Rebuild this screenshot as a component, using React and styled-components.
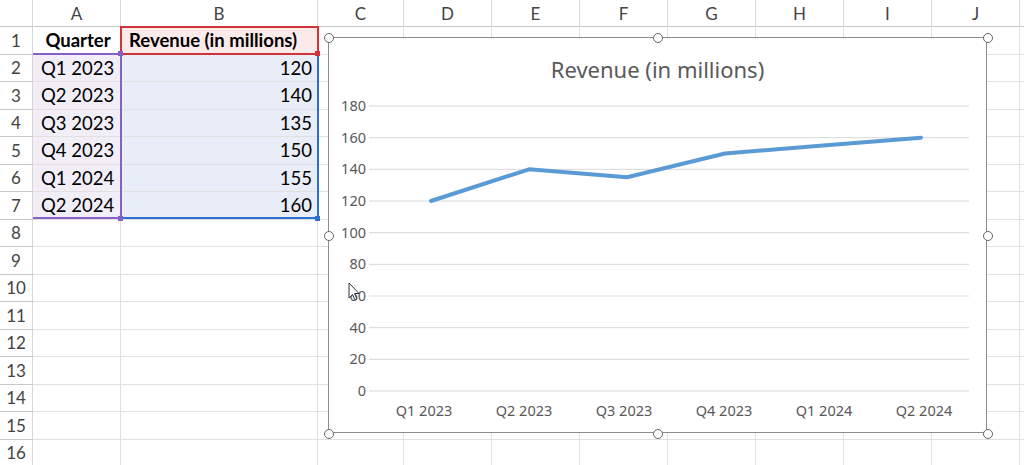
import React from "react";
import styled, { createGlobalStyle } from "styled-components";

const G = createGlobalStyle`
  body { margin:0; background:#fff; font-family: Lato, "Noto Sans", sans-serif; }
`;
const cols = [33, 88, 197, 86, 88, 88, 88, 88, 88, 88, 88, 30];
const letters = ["", "A", "B", "C", "D", "E", "F", "G", "H", "I", "J", ""];
const RH = 27.5;

const Sheet = styled.div`
  position: relative; width:1024px; height:465px; overflow:hidden;
  display:grid; grid-template-columns:${cols.map(c => c + "px").join(" ")};
  grid-template-rows:27px repeat(16, ${RH}px);
`;
const Cell = styled.div`
  box-sizing:border-box; border-right:1px solid #e1e1e1; border-bottom:1px solid #e1e1e1;
  font-size:18.5px; color:#000; display:flex; align-items:center; white-space:nowrap;
  padding:0 5px 0 8px;
  justify-content:${p => p.$right ? "flex-end" : p.$center ? "center" : "flex-start"};
  font-weight:${p => p.$bold ? 700 : 400};
  background:${p => p.$bg || "#fff"};
`;
const Head = styled(Cell)`
  background:#fff; color:#444; justify-content:center; font-size:17px; padding:0;
  border-right:1px solid #d6d6d6; border-bottom:1px solid #c8c8c8;
`;
const Sel = styled.div`
  position:absolute; box-sizing:border-box; pointer-events:none;
`;
const RedSel = styled(Sel)`left:120px; top:26px; width:199px; height:29px; border:2px solid #d13438;`;
const PurpleSel = styled(Sel)`left:33px; top:53px; width:89px; height:166px; border:2px solid #8661c5; border-left:none;`;
const BlueSel = styled(Sel)`left:120px; top:53px; width:199px; height:166px; border:2px solid #2f6fd0; border-top:none; border-left-color:#8661c5;`;
const Dot = styled.div`
  position:absolute; width:5px; height:5px; background:${p => p.$c};
  left:${p => p.$x}px; top:${p => p.$y}px;
`;
const Chart = styled.div`
  position:absolute; left:328px; top:37px; width:659px; height:396px;
  background:#fff; border:1px solid #8c8c8c; box-sizing:border-box;
  display:flex; flex-direction:column; align-items:center;
`;
const Title = styled.div`
  margin-top:16px; font-size:22px; color:#595959; position:relative; z-index:1;
  font-family:"Noto Sans", sans-serif;
`;
const Plot = styled.svg`position:absolute; left:0; top:0;`;
const Handle = styled.div`
  position:absolute; width:8px; height:8px; border:1.5px solid #666; border-radius:50%; background:#fff;
  left:${p => p.$a * 659 - 5.5}px; top:${p => p.$b * 396 - 5.5}px;
`;

const quarters = ["Q1 2023","Q2 2023","Q3 2023","Q4 2023","Q1 2024","Q2 2024"];
const vals = [120,140,135,150,155,160];

export default function App() {
  const rows = [];
  rows.push(letters.map((l, i) => <Head key={"h"+i}>{l}</Head>));
  for (let r = 1; r <= 16; r++) {
    rows.push(cols.map((_, i) => {
      if (i === 0) return <Head key={r+"-"+i}>{r}</Head>;
      let txt = "", bold=false, right=false, center=false, bg;
      if (r === 1 && i === 1) { txt = "Quarter"; bold = true; center = true; }
      if (r === 1 && i === 2) { txt = "Revenue (in millions)"; bold = true; bg="#fbeaea"; }
      if (r >= 2 && r <= 7 && i === 1) { txt = quarters[r-2]; bg="#f1eef8"; }
      if (r >= 2 && r <= 7 && i === 2) { txt = vals[r-2]; right = true; bg="#e9edf7"; }
      return <Cell key={r+"-"+i} $bold={bold} $right={right} $center={center} $bg={bg}>{txt}</Cell>;
    }));
  }
  const px = i => 430 - 328 + i * 98;
  const py = v => 390 - 37 - v * (285/180);
  const hpos = [[0,0],[0.5,0],[1,0],[0,0.5],[1,0.5],[0,1],[0.5,1],[1,1]];
  return (
    <>
      <G />
      <Sheet>
        {rows}
        <RedSel />
        <PurpleSel />
        <BlueSel />
        <Dot $c="#d13438" $x={315} $y={51} />
        <Dot $c="#8661c5" $x={118} $y={51} />
        <Dot $c="#8661c5" $x={118} $y={216} />
        <Dot $c="#2f6fd0" $x={315} $y={216} />
        <Chart>
          <Plot width="659" height="396">
            {[0,20,40,60,80,100,120,140,160,180].map(v => (
              <g key={v}>
                <line x1={40} x2={640} y1={py(v)} y2={py(v)} stroke="#d9d9d9" strokeWidth="1" />
                <text x={37} y={py(v)+5} textAnchor="end" fontSize="14.5" fill="#595959" fontFamily="Noto Sans, sans-serif">{v}</text>
              </g>
            ))}
            {quarters.map((q, i) => (
              <text key={q} x={95 + i*100} y={378} textAnchor="middle" fontSize="14.5" fill="#595959" fontFamily="Noto Sans, sans-serif">{q}</text>
            ))}
            <polyline fill="none" stroke="#5b9bd5" strokeWidth="4" strokeLinejoin="round" strokeLinecap="round"
              points={vals.map((v,i)=>`${px(i)},${py(v)}`).join(" ")} />
            <path d="M20 245 L20 260 L23.5 256.5 L26 262 L28 261 L25.5 255.5 L30 255.5 Z" fill="#fff" stroke="#333" strokeWidth="1" />
          </Plot>
          <Title>Revenue (in millions)</Title>
          {hpos.map(([a,b],k)=>(<Handle key={k} $a={a} $b={b} />))}
        </Chart>
      </Sheet>
    </>
  );
}
